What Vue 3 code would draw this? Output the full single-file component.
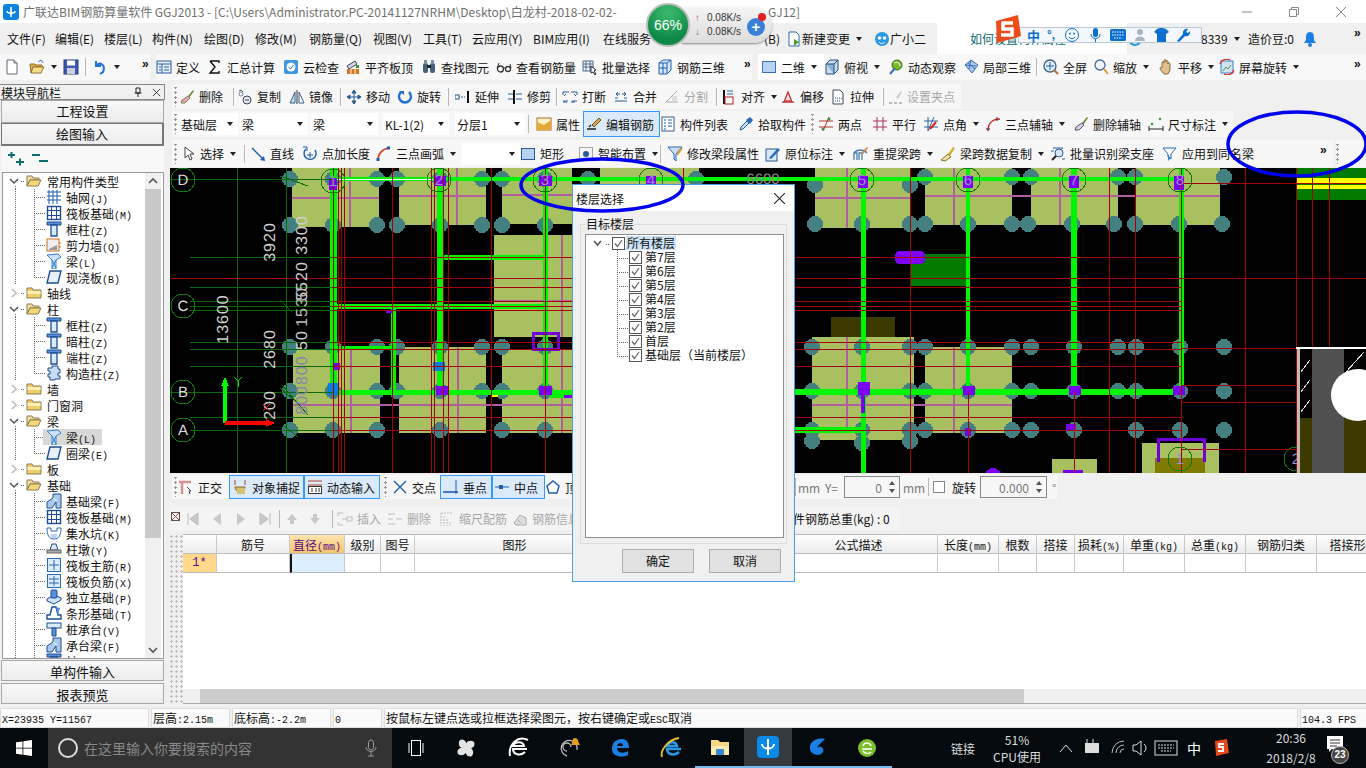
<template>
  <div class="app">
    <div class="title">
      <svg class="logo" viewBox="0 0 16 16"><rect width="16" height="16" rx="3" fill="#0a84e0"/><path d="M8 3v10M4 7c0 3 8 3 8 0" fill="none" stroke="#fff" stroke-width="1.6"/></svg>
      <span class="ttl a">广联达BIM钢筋算量软件 GGJ2013 - [C:\Users\Administrator.PC-20141127NRHM\Desktop\白龙村-2018-02-02-</span>
      <span class="ttl b">GJ12]</span>
      <div class="winbtns">
        <svg viewBox="0 0 10 10" class="wb min"><path d="M0 5h10" stroke="#888" /></svg>
        <svg viewBox="0 0 10 10" class="wb res"><path d="M.5 2.5h7v7h-7zM2.5 2.5v-2h7v7h-2" fill="none" stroke="#888"/></svg>
        <svg viewBox="0 0 10 10" class="wb cls"><path d="M0 0l10 10M10 0L0 10" stroke="#888"/></svg>
      </div>
    </div>

    <div class="work">
      <template v-for="b in blocks" :key="b.id">
        <div v-if="b.items" class="tb" :class="b.id" :style="{ marginLeft: b.ml + 'px', width: b.w + 'px' }">
          <div v-for="(c, n) in b.items" :key="n" class="cell" :class="c.cls" :style="{ width: c.w + 'px', paddingLeft: c.pl + 'px' }">
            <div v-if="c.dd" class="ddbox" :class="{ spin: c.spin }" :style="{ width: c.dd + 'px' }">
              <span>{{ c.t }}</span>
              <svg v-if="c.spin" viewBox="0 0 8 16" width="8" height="16"><path d="M4 2l3 4H1zM4 14l3-4H1z" fill="#555" /></svg>
              <i v-else class="arr"></i>
            </div>
            <template v-else>
              <svg v-if="c.i" class="ico" viewBox="0 0 16 16" v-html="icons[c.i]"></svg>
              <span v-if="c.t" class="lbl">{{ c.t }}</span>
              <i v-if="c.a" class="arr"></i>
            </template>
          </div>
        </div>

        <svg v-else-if="b.id === 'canvas'" class="canvas" viewBox="170 168 1196 305" shape-rendering="crispEdges">
          <rect x="170" y="168" width="1196" height="305" fill="#000" />
          <rect v-for="(s, n) in cad.slabs" :key="'s' + n" :x="s[0]" :y="s[1]" :width="s[2] - s[0]" :height="s[3] - s[1]" :fill="s[4] || '#a9c060'" />
          <line v-for="(l, n) in cad.pink" :key="'p' + n" :x1="l[0]" :y1="l[1]" :x2="l[2]" :y2="l[3]" stroke="#b0609f" stroke-width="2" />
          <circle v-for="(c, n) in cad.cols" :key="'c' + n" :cx="c[0]" :cy="c[1]" r="8" fill="#43807f" />
          <line v-for="(l, n) in cad.beams" :key="'b' + n" :x1="l[0]" :y1="l[1]" :x2="l[2]" :y2="l[3]" stroke="#00f500" :stroke-width="l[4]" />
          <line x1="337" y1="179" x2="433" y2="179" stroke="#fff" />
          <rect v-for="(s, n) in cad.marks" :key="'m' + n" :x="s[0]" :y="s[1]" :width="s[2]" :height="s[3]" :fill="s[4] || '#7b00f0'" />
          <path d="M533.5 333.5h25v16h-25z" fill="none" stroke="#7000d8" stroke-width="3" />
          <path d="M1158.5 462V439.5h46V462" fill="none" stroke="#7000d8" stroke-width="3" />
          <circle cx="993" cy="476" r="8" fill="#7b00f0" />
          <rect x="895" y="251" width="30" height="13" rx="5" fill="#8000ff" />
          <line v-for="(l, n) in cad.gridLines" :key="'g' + n" :x1="l[0]" :y1="l[1]" :x2="l[2]" :y2="l[3]" stroke="#0a6a0a" />
          <line v-for="(l, n) in cad.reds" :key="'r' + n" :x1="l[0]" :y1="l[1]" :x2="l[2]" :y2="l[3]" stroke="#a40000" />
          <g fill="none" stroke="#0a7a0a">
            <circle v-for="(a, n) in cad.bubbles" :key="'bu' + n" :cx="a[0]" :cy="a[1]" :r="a[3] || 12" />
          </g>
          <g text-rendering="geometricPrecision" class="cadtxt">
            <text v-for="(a, n) in cad.bubbles" :key="'bt' + n" :x="a[0]" :y="a[1] + 5" text-anchor="middle" :fill="a[3] ? '#9a8fd0' : '#ddd'" font-size="15">{{ a[2] }}</text>
            <text v-for="(d, n) in cad.dims" :key="'d' + n" :transform="`translate(${d[0]} ${d[1]}) rotate(-90)`" text-anchor="middle" :fill="d[3] || '#d0d0d0'" font-size="16" letter-spacing="1">{{ d[2] }}</text>
            <text x="763" y="184" text-anchor="middle" fill="#8d8d8d" font-size="15">6600</text>
          </g>
          <!-- UCS -->
          <path d="M225 423V383" stroke="#00ff00" stroke-width="4" />
          <path d="M225 377l-4 9h8z" fill="#00ff00" />
          <path d="M225 423h45" stroke="#ff0000" stroke-width="4" />
          <path d="M275 423l-9-4v8z" fill="#ff0000" />
          <path d="M234 377l4 4 4-4M238 381v6" stroke="#00d000" fill="none" />
          <path d="M263 404l7 7M270 404l-7 7" stroke="#ff2020" />
          <!-- right corner -->
          <rect x="1296" y="347" width="70" height="2" fill="#fff" />
          <rect x="1297" y="349" width="15" height="124" fill="#000" />
          <rect x="1297" y="349" width="3" height="124" fill="#bbb" />
          <g stroke="#ddd"><path d="M1301 372l9-12M1301 392l9-12M1301 412l9-12M1346 372l18-20" /></g>
          <rect x="1300" y="418" width="12" height="55" fill="#3d3a00" />
          <rect x="1312" y="349" width="32" height="124" fill="#505050" />
          <rect x="1344" y="418" width="22" height="55" fill="#3d3a00" />
          <ellipse cx="1358" cy="395" rx="27" ry="26" fill="#fff" shape-rendering="auto" />
        </svg>

        <div v-else-if="b.id === 'gridtable'" class="gridwrap">
          <div class="gutter"></div>
          <div class="gridmain">
            <div class="thead">
              <div v-for="h in columns" :key="h.x" class="th" :class="{ hot: h.hot }" :style="{ width: h.w + 'px' }">
                {{ h.t }}<small v-if="h.u">{{ h.u }}</small>
              </div>
            </div>
            <div class="tbody">
              <div v-for="h in columns" :key="h.x" class="td" :class="{ rowhead: h.rh, cur: h.hot }" :style="{ width: h.w + 'px' }">{{ h.rh ? '1*' : '' }}</div>
            </div>
            <div class="tfill"></div>
            <div class="hscroll"><div class="thumb"></div></div>
          </div>
        </div>
      </template>

      <aside class="nav">
        <div class="navhead">
          <span>模块导航栏</span>
          <svg viewBox="0 0 10 10" class="pin"><path d="M3 1h4v5H3zM1.500 6h7M5 6v4" fill="none" stroke="#222" /></svg>
          <svg viewBox="0 0 10 10" class="pinx"><path d="M1 1l8 8M9 1l-8 8" stroke="#333" /></svg>
        </div>
        <div class="navbtn">工程设置</div>
        <div class="navbtn pressed">绘图输入</div>
        <div class="navtools">
          <svg viewBox="0 0 18 16" width="18" height="16"><path d="M1 4h7M4.500 1v6M9 11h8M13 7.500v7" stroke="#0b6e6e" stroke-width="2" /></svg>
          <svg viewBox="0 0 18 16" width="18" height="16"><path d="M1 4h8M8 10h9" stroke="#0b6e6e" stroke-width="2" /></svg>
        </div>
        <div class="treebox">
          <div class="treelist">
            <div v-for="(r, n) in tree" :key="n" class="trow">
              <svg class="guide" :width="r.lv ? 43 : 23" height="16" shape-rendering="crispEdges">
                <template v-if="r.lv">
                  <path d="M12 0v16" stroke="#666" stroke-dasharray="1 1" />
                  <path :d="r.last ? 'M31 0v8' : 'M31 0v16'" stroke="#666" stroke-dasharray="1 1" />
                  <path d="M31 8h11" stroke="#666" stroke-dasharray="1 1" />
                </template>
                <template v-else>
                  <path v-if="r.open" d="M12 13v3" stroke="#666" stroke-dasharray="1 1" />
                  <path v-if="r.open" d="M7 6l4 4 4-4" fill="none" stroke="#555" stroke-width="1.500" shape-rendering="auto" />
                  <path v-else d="M9 4l4 4-4 4" fill="none" stroke="#bbb" stroke-width="1.500" shape-rendering="auto" />
                  <path d="M18 8h4" stroke="#666" stroke-dasharray="1 1" />
                </template>
              </svg>
              <div class="tnode" :class="{ sel: r.sel, l0: !r.lv }">
                <svg class="ico" viewBox="0 0 16 16" v-html="icons[r.ic]"></svg>
                <span>{{ r.t.split('(')[0] }}<small v-if="r.t.includes('(')">({{ r.t.split('(')[1] }}</small></span>
              </div>
            </div>
          </div>
          <div class="vscroll">
            <svg class="vbtn" viewBox="0 0 16 16"><path d="M4 10l4-4 4 4" fill="none" stroke="#555" stroke-width="1.600" /></svg>
            <div class="vthumb"></div>
            <div class="vtrack"></div>
            <svg class="vbtn" viewBox="0 0 16 16"><path d="M4 6l4 4 4-4" fill="none" stroke="#555" stroke-width="1.600" /></svg>
          </div>
        </div>
        <div class="navbtn low">单构件输入</div>
        <div class="navbtn low second">报表预览</div>
      </aside>
    </div>

    <div class="status">
      <div class="sf" style="width: 146px"><small>X=23935 Y=11567</small></div>
      <div class="sf" style="width: 76px">层高<small>:2.15m</small></div>
      <div class="sf" style="width: 96px">底标高<small>:-2.2m</small></div>
      <div class="sf" style="width: 46px"><small>0</small></div>
      <div class="sf grow">按鼠标左键点选或拉框选择梁图元，按右键确定或<small>ESC</small>取消</div>
      <div class="sf" style="width: 68px"><small>104.3 FPS</small></div>
    </div>

    <div class="taskbar">
      <div class="startbtn">
        <svg viewBox="0 0 16 16" width="16" height="16"><path d="M0 2.300l6.500-.9v6.300H0zM7.300 1.300L16 0v7.700H7.300zM0 8.400h6.500v6.300L0 13.800zM7.300 8.400H16V16l-8.700-1.200z" fill="#fff" /></svg>
      </div>
      <div class="search">
        <svg viewBox="0 0 22 22" width="22" height="22"><circle cx="11" cy="11" r="9" fill="none" stroke="#ddd" stroke-width="2" /></svg>
        <span>在这里输入你要搜索的内容</span>
        <svg class="mic" viewBox="0 0 12 18" width="12" height="18"><rect x="3.500" y="1" width="5" height="10" rx="2.500" fill="none" stroke="#999" /><path d="M1 8c0 6 10 6 10 0M6 13v4M3 17h6" fill="none" stroke="#999" /></svg>
      </div>
      <div class="taskapps">
        <div v-for="t in taskApps" :key="t.x" class="tapp" :class="{ active: t.active, run: t.run }" :style="{ width: t.w + 'px' }">
          <svg viewBox="0 0 24 24" width="24" height="24" v-html="t.svg"></svg>
        </div>
      </div>
      <div class="tray">
        <span class="linktxt">链接</span>
        <div class="cpu"><span>51%</span><span>CPU使用</span></div>
        <svg viewBox="0 0 122 20" width="122" height="20" class="trayicons">
          <path d="M0 14l6-7 6 7" fill="none" stroke="#ddd" />
          <rect x="25" y="5" width="14" height="10" fill="#ddd" /><path d="M27 1v4M33 1v4" stroke="#ddd" />
          <path d="M52 15a12 12 0 0 1 12-12M56 15a8 8 0 0 1 8-8M60 15a4 4 0 0 1 4-4" fill="none" stroke="#bbb" />
          <path d="M73 7h3l5-4v14l-5-4h-3zM84 6a5 5 0 0 1 0 8" fill="none" stroke="#ddd" />
          <rect x="95" y="3" width="22" height="14" fill="none" stroke="#ddd" /><path d="M98 7h16M98 10h16M101 13h10" stroke="#ddd" stroke-dasharray="2 1" />
        </svg>
        <span class="zh">中</span>
        <svg viewBox="0 0 16 18" width="16" height="18" class="sg"><path d="M2 2l12-2 2 14-13 3z" fill="#e8471c" /><path d="M11 5H6v3h4v4H5" fill="none" stroke="#fff" stroke-width="1.800" /></svg>
        <div class="clock"><span>20:36</span><span>2018/2/8</span></div>
        <div class="notif">
          <svg viewBox="0 0 16 16" width="16" height="16"><path d="M0 0h16v13H5l-3 3v-3H0z" fill="#fff" /><path d="M3 4h10M3 7h10M3 10h7" stroke="#333" /></svg>
          <b class="badge">23</b>
        </div>
      </div>
    </div>

    <!-- 浮动窗 -->
    <div class="dialog">
      <div class="dlgtitle">
        <span>楼层选择</span>
        <svg viewBox="0 0 10 10" width="11" height="11"><path d="M0 0l10 10M10 0L0 10" stroke="#222" /></svg>
      </div>
      <div class="dlgbody">
        <fieldset class="group">
          <legend>目标楼层</legend>
          <div class="floorbox">
            <div v-for="(f, n) in floors" :key="f" class="frow" :class="{ rootf: n === 0 }">
              <svg class="fguide" :width="n === 0 ? 26 : 43" height="14" shape-rendering="crispEdges">
                <template v-if="n === 0">
                  <path d="M8 5l3.500 4L15 5" fill="none" stroke="#555" stroke-width="1.500" shape-rendering="auto" />
                  <path d="M20 8h4" stroke="#666" stroke-dasharray="1 1" />
                </template>
                <template v-else>
                  <path :d="n === floors.length - 1 ? 'M31 0v8' : 'M31 0v14'" stroke="#666" stroke-dasharray="1 1" />
                  <path d="M31 8h11" stroke="#666" stroke-dasharray="1 1" />
                </template>
              </svg>
              <svg class="chk" viewBox="0 0 13 13" width="13" height="13"><rect x=".5" y=".5" width="12" height="12" fill="#fff" stroke="#555" /><path d="M3 6.500l2.500 3L10 3" fill="none" stroke="#666" stroke-width="1.300" /></svg>
              <span class="ftxt">{{ f }}</span>
            </div>
          </div>
        </fieldset>
        <div class="dlgbtns">
          <div class="dbtn">确定</div>
          <div class="dbtn">取消</div>
        </div>
      </div>
    </div>

    <!-- 网速球 -->
    <div class="meter">
      <div class="ball">66%</div>
      <div class="pill">
        <div class="sp"><b class="up">↑</b>0.08K/s</div>
        <div class="sp"><b class="dn">↓</b>0.08K/s</div>
      </div>
      <div class="plus">+<i></i></div>
    </div>

    <!-- 输入法条 -->
    <div class="ime">
      <svg class="imes" viewBox="0 0 28 28" width="28" height="28"><path d="M3 6l22-6 3 21-24 7z" fill="#ee4b1a" /><path d="M20 8H10v6h9v6H8" fill="none" stroke="#fff" stroke-width="3.500" /></svg>
      <div class="imebar">
        <span class="imez">中</span>
        <span class="imep">°,</span>
        <svg viewBox="0 0 140 14" width="140" height="14">
          <circle cx="12" cy="7" r="6.500" fill="none" stroke="#0b6fd0" /><circle cx="10" cy="5.500" r=".9" fill="#0b6fd0" /><circle cx="14" cy="5.500" r=".9" fill="#0b6fd0" /><path d="M9 9a3.500 3.500 0 0 0 6 0" fill="none" stroke="#0b6fd0" />
          <rect x="33" y="0" width="5" height="9" rx="2.500" fill="#0b6fd0" /><path d="M31 6c0 6 9 6 9 0M35.500 11v3" fill="none" stroke="#0b6fd0" />
          <rect x="50" y="1" width="16" height="12" rx="1.500" fill="#0b6fd0" /><path d="M52 4h12M52 7h12M54 10h8" stroke="#fff" stroke-dasharray="1.500 1" />
          <circle cx="80" cy="4" r="3" fill="#a8b4c0" /><path d="M75 13c0-6 10-6 10 0z" fill="#a8b4c0" />
          <path d="M97 1l3-1h3l3 1 3 3-3 2v8h-9V6l-3-2z" fill="#0b6fd0" />
          <path d="M117 13l6-7a4 4 0 0 1 5-5l-2 3 2 1 2-2a4 4 0 0 1-5 5l-6 6z" fill="#0b6fd0" />
        </svg>
      </div>
    </div>

    <!-- 手绘标记 -->
    <svg class="marks" viewBox="0 0 1366 768">
      <ellipse cx="602" cy="185" rx="81" ry="26" fill="none" stroke="#0000ee" stroke-width="3.500" />
      <ellipse cx="1297" cy="144" rx="69" ry="32" fill="none" stroke="#0000ee" stroke-width="3.500" />
    </svg>
  </div>
</template>

<script setup>
// 工具栏布局：每个单元格的宽度由相邻两项的 x 相减得到
const mk = (id, start, end, list, ml) => {
  const items = list.map((e, i) => {
    const next = i + 1 < list.length ? list[i + 1][0] : end;
    const [x, code, t, o = {}] = e;
    const cell = { w: next - x, pl: o.pl || 0, t: t || '', a: o.a, cls: [], dd: o.dd, spin: o.spin };
    if (code === '|') cell.cls.push('sep');
    else if (code === ':') cell.cls.push('grip');
    else if (code === '>') { cell.cls.push('more'); cell.t = '»'; }
    else if (code === '_') cell.cls.push('gap');
    else if (code) cell.i = code;
    if (o.off) cell.cls.push('off');
    if (o.gray) cell.cls.push('gray');
    if (o.on) cell.cls.push('on');
    if (o.white) cell.cls.push('white');
    if (o.teal) cell.cls.push('teal');
    return cell;
  });
  if (items.length && list[0][0] > start) items.unshift({ w: list[0][0] - start, pl: 0, cls: [] });
  return { id, items, ml: ml, w: end - start };
};

const menuRow = mk('menu', 0, 1366, [
  [7, null, '文件(F)'], [55, null, '编辑(E)'], [104, null, '楼层(L)'], [152, null, '构件(N)'], [204, null, '绘图(D)'],
  [255, null, '修改(M)'], [309, null, '钢筋量(Q)'], [373, null, '视图(V)'], [423, null, '工具(T)'], [472, null, '云应用(Y)'],
  [533, null, 'BIM应用(I)'], [603, null, '在线服务'], [655, null, ''], [764, null, '(B)'],
  [786, 'change', '新建变更', { a: 1 }], [874, 'xiaoer', '广小二'], [937, null, '如何设置构件属性', { white: 1, teal: 1, pl: 33 }],
  [1127, 'xiaoer'], [1201, null, '8339', { a: 1 }], [1248, null, '造价豆:0'], [1302, 'bell', ''], [1351, '>'],
], 0);

const row1 = mk('r1', 0, 1366, [
  [4, 'new'], [29, 'open', '', { a: 1 }], [63, 'save'], [85, '|'], [92, 'undo', '', { a: 1 }], [139, '>'], [150, '_'], [156, 'def', '定义'], [207, 'sigma', '汇总计算'],
  [283, 'cloud', '云检查'], [345, 'level', '平齐板顶'], [421, 'find', '查找图元'], [496, 'glasses', '查看钢筋量'], [582, 'batch', '批量选择'],
  [657, 'r3d', '钢筋三维'], [741, '>'], [752, '_'], [758, 'd2', '二维', { white: 1, a: 1, pl: 3 }], [824, 'top', '俯视', { a: 1 }],
  [888, 'orbit', '动态观察'], [963, 'local', '局部三维'], [1036, '|'], [1043, 'full', '全屏'], [1093, 'zoom', '缩放', { a: 1 }],
  [1158, 'pan', '平移', { a: 1 }], [1219, 'rot', '屏幕旋转', { a: 1 }], [1351, '>'],
], 0);

const row2 = mk('r2', 172, 961, [
  [174, ':'], [179, 'del', '删除'], [233, '|'], [237, 'copy', '复制'], [289, 'mirror', '镜像'], [340, '|'], [346, 'move', '移动'], [397, 'rotate', '旋转'],
  [448, '|'], [455, 'extend', '延伸'], [507, 'trim', '修剪'], [556, '|'], [562, 'break', '打断'], [613, 'merge', '合并'], [664, 'split', '分割', { off: 1 }],
  [716, '|'], [721, 'align', '对齐', { a: 1 }], [780, 'offset', '偏移'], [830, 'stretch', '拉伸'], [883, '|'], [887, 'grips', '设置夹点', { off: 1 }],
], 7);

const row3 = mk('r3', 172, 1233, [
  [174, ':'], [179, null, '基础层', { dd: 59 }], [240, null, '梁', { dd: 68 }], [311, null, '梁', { dd: 67 }], [383, null, 'KL-1(2)', { dd: 66 }], [455, null, '分层1', { dd: 70 }],
  [528, '|'], [536, 'attr', '属性'], [583, 'edit', '编辑钢筋', { on: 1, pl: 2 }], [660, 'list', '构件列表'], [738, 'pick', '拾取构件'], [811, ':'], [818, 'twopt', '两点'],
  [872, 'para', '平行'], [923, 'angle', '点角', { a: 1 }], [985, 'arc3', '三点辅轴', { a: 1 }], [1073, 'delaxis', '删除辅轴'], [1148, 'dim', '尺寸标注', { a: 1 }],
], 7);

const row4 = mk('r4', 172, 1366, [
  [174, ':'], [180, 'sel', '选择', { a: 1 }], [244, '|'], [250, 'line', '直线'], [302, 'ptlen', '点加长度'], [376, 'arc', '三点画弧', { a: 1 }],
  [461, null, '', { dd: 59 }], [520, 'rect', '矩形'], [578, 'smart', '智能布置', { a: 1 }], [660, '|'], [667, 'span', '修改梁段属性'], [765, 'inplace', '原位标注', { a: 1 }],
  [853, 'relift', '重提梁跨', { a: 1 }], [940, 'cpspan', '梁跨数据复制', { a: 1 }], [1050, 'batchid', '批量识别梁支座'], [1162, 'apply', '应用到同名梁'], [1317, '>'], [1333, '_'], [1336, ':'],
], 7);

const snap = mk('snap', 172, 1057, [
  [174, ':'], [178, 'ortho', '正交'], [229, 'osnap', '对象捕捉', { on: 1, pl: 2 }], [304, 'dyn', '动态输入', { on: 1, pl: 2 }], [380, '_'], [384, ':'], [392, 'cross', '交点'],
  [440, 'perp', '垂点', { on: 1, pl: 2 }], [492, 'mid', '中点', { on: 1, pl: 1 }], [545, 'vertex', '顶'], [580, null, ''], [795, '|'], [798, null, 'mm', { gray: 1 }], [825, null, 'Y=', { gray: 1 }],
  [844, null, '0', { dd: 56, spin: 1 }], [903, null, 'mm', { gray: 1 }], [928, '|'], [932, 'box'], [952, null, '旋转'], [980, null, '0.000', { dd: 67, spin: 1 }], [1052, null, '°', { gray: 1 }],
], 7);

const gridbar = mk('gridbar', 170, 900, [
  [170, 'xbox'], [185, 'first'], [209, 'prev'], [233, 'next'], [257, 'last'], [279, '|'], [284, 'up'], [307, 'down'], [332, '|'], [337, 'ins', '插入', { off: 1 }], [387, 'dele', '删除', { off: 1 }],
  [439, 'scale', '缩尺配筋', { off: 1 }], [512, 'info', '钢筋信息', { off: 1 }], [580, null, ''], [765, null, '单构件钢筋总重(kg) : 0'],
], 5);

const blocks = [
  menuRow, row1, row2, row3, row4,
  { id: 'canvas' },
  snap, gridbar,
  { id: 'gridtable' },
];

const colX = [
  [183, 217], [217, 290, '筋号'], [290, 345, '直径', '(mm)', true], [345, 381, '级别'], [381, 415, '图号'], [415, 615, '图形'], [615, 780, '计算公式'],
  [780, 938, '公式描述'], [938, 999, '长度', '(mm)'], [999, 1037, '根数'], [1037, 1075, '搭接'], [1075, 1124, '损耗', '(%)'], [1124, 1185, '单重', '(kg)'],
  [1185, 1246, '总重', '(kg)'], [1246, 1317, '钢筋归类'], [1317, 1391, '搭接形式'],
];
const columns = colX.map((c, i) => ({ x: c[0], w: c[1] - c[0], t: c[2] || '', u: c[3], hot: c[4], rh: i === 0 }));

// 导航树
const t0 = (t, ic, open) => ({ lv: 0, t, ic, open });
const t1 = (t, ic, o = {}) => ({ lv: 1, t, ic, ...o });
const tree = [
  t0('常用构件类型', 'fopen', true), t1('轴网(J)', 'tgrid'), t1('筏板基础(M)', 'traft'), t1('框柱(Z)', 'tcol'), t1('剪力墙(Q)', 'twall'), t1('梁(L)', 'tbeam'), t1('现浇板(B)', 'tslab', { last: true }),
  t0('轴线', 'fclosed'), t0('柱', 'fopen', true), t1('框柱(Z)', 'tcol'), t1('暗柱(Z)', 'tcol'), t1('端柱(Z)', 'tcol'), t1('构造柱(Z)', 'tgear', { last: true }),
  t0('墙', 'fclosed'), t0('门窗洞', 'fclosed'), t0('梁', 'fopen', true), t1('梁(L)', 'tbeam', { sel: true }), t1('圈梁(E)', 'tslab', { last: true }),
  t0('板', 'fclosed'), t0('基础', 'fopen', true), t1('基础梁(F)', 'tfbeam'), t1('筏板基础(M)', 'traft'), t1('集水坑(K)', 'tpit'), t1('柱墩(Y)', 'tpier'), t1('筏板主筋(R)', 'tmain'),
  t1('筏板负筋(X)', 'tneg'), t1('独立基础(P)', 'tiso'), t1('条形基础(T)', 'tstrip'), t1('桩承台(V)', 'tcap'), t1('承台梁(F)', 'tfbeam'), t1('桩(U)', 'tcol'),
];

const floors = ['所有楼层', '第7层', '第6层', '第5层', '第4层', '第3层', '第2层', '首层', '基础层（当前楼层）'];

const icons = {
  new: '<path d="M3 1h7l3 3v11H3z" fill="#fff" stroke="#667"/><path d="M10 1v3h3" fill="#ddd" stroke="#667"/>',
  open: '<path d="M1 5h5l1 1h6v2H4l-2 6z" fill="#e0b050" stroke="#96702a"/><path d="M2 14l2-6h11l-3 6z" fill="#f7dc8c" stroke="#96702a"/><path d="M9 3l3-2 2 3" fill="none" stroke="#3a7fd0"/>',
  save: '<rect x="1" y="1" width="14" height="14" fill="#3d5bb0" stroke="#223a80"/><rect x="4" y="1.500" width="8" height="5" fill="#fff"/><rect x="4" y="9" width="8" height="6" fill="#ccd"/>',
  undo: '<path d="M4 2v5h5M4 7c4-5 10-1 7 6l-3 2" fill="none" stroke="#1f6fd6" stroke-width="2"/>',
  def: '<rect x="1" y="2" width="14" height="12" fill="#e8f0fa" stroke="#2d5c9a"/><path d="M1 5h14M6 5v9M3 8h2M3 11h2M8 8h5M8 11h5" stroke="#2d5c9a"/>',
  sigma: '<path d="M3 2h9v2M11 14H3l5-6-5-6M3 14h9v-2" fill="none" stroke="#111" stroke-width="1.400"/>',
  cloud: '<rect x="1" y="1" width="14" height="14" rx="2" fill="#3d96e0"/><circle cx="8" cy="8" r="4.500" fill="#fff"/><path d="M5.500 8l2 2 3-4" fill="none" stroke="#2c7dc4"/>',
  level: '<path d="M2 7l8-5 2 3-8 5z" fill="#d0d8e8" stroke="#445"/><rect x="2" y="10" width="12" height="5" fill="#d8761e"/><path d="M6 10v5M10 10v5" stroke="#fff"/><path d="M11 6h3v3h-3z" fill="#4a9a30"/>',
  find: '<rect x="2" y="4" width="5" height="10" rx="2" fill="#47607f"/><rect x="9" y="4" width="5" height="10" rx="2" fill="#47607f"/><rect x="3" y="1" width="3" height="4" fill="#7a8ea8"/><rect x="10" y="1" width="3" height="4" fill="#7a8ea8"/><rect x="6" y="6" width="4" height="3" fill="#223"/>',
  glasses: '<circle cx="4.500" cy="10" r="3" fill="none" stroke="#333" stroke-width="1.300"/><circle cx="12" cy="10" r="2.500" fill="none" stroke="#333" stroke-width="1.300"/><path d="M7.500 9h2M1 9l2-5M15 9l-1-4" stroke="#333"/>',
  batch: '<path d="M1 2h10v10H1zM1 5h10M1 8h10M4 2v10M8 2v10" fill="none" stroke="#4a6a90"/><path d="M9 7l5 4-2 1 2 3-1 1-2-3-2 1z" fill="#fff" stroke="#223"/>',
  r3d: '<path d="M2 4l4-3h8v10l-4 4H2z" fill="#d8e8f8" stroke="#1c5db0"/><path d="M2 4h8v11M10 4l4-3M6 4v11M2 9h8" fill="none" stroke="#1c5db0"/>',
  d2: '<rect x="1.500" y="2.500" width="13" height="11" fill="#b8d2f2" stroke="#3a70c0"/>',
  top: '<path d="M2 5l4-4h8v10l-4 4H2z" fill="#c8def0" stroke="#244a78"/><path d="M2 5h8v10M10 5l4-4" fill="#8fb4d8" stroke="#244a78"/>',
  orbit: '<circle cx="9" cy="6" r="5" fill="#7ab62e" stroke="#3c7010"/><path d="M2 15l5-6" stroke="#3a6fc0" stroke-width="2"/><path d="M6 4c3-2 6 0 6 3" fill="none" stroke="#fff"/>',
  local: '<path d="M2 6l6-5 7 5-6 8z" fill="#a8c8ec" stroke="#3a6fb0"/><path d="M5 4l7 6M8 1L6 10M2 6l11 1" stroke="#3a6fb0" fill="none"/>',
  full: '<circle cx="7" cy="7" r="6" fill="#e4eefa" stroke="#3a5f8c" stroke-width="1.300"/><path d="M7 3v8M3 7h8" stroke="#2060b0"/><path d="M11 11l4 4" stroke="#b07030" stroke-width="2"/>',
  zoom: '<circle cx="7" cy="6" r="5" fill="#eef4fb" stroke="#4a6a90" stroke-width="1.300"/><path d="M11 10l4 5" stroke="#d8a030" stroke-width="2"/>',
  pan: '<path d="M4 9V4c0-2 2-2 2 0V2c0-2 2-2 2 0v1c0-2 2-2 2 0v2c0-2 2-1 2 0v6l-2 4H6L2 10c0-2 1-2 2-1z" fill="#e0c090" stroke="#8a6a38"/>',
  rot: '<rect x="2" y="2" width="12" height="12" fill="#cfe4f7" stroke="#3a80c8"/><path d="M4 12l3-4 2 2 3-4" stroke="#4a9a30" fill="none"/><path d="M1 5a7 7 0 0 1 10-4M15 11a7 7 0 0 1-10 4" fill="none" stroke="#e03020" stroke-width="1.400"/>',
  del: '<path d="M9 7l5-6 1 1-5 7z" fill="#6a8f3a"/><path d="M9 7l2 2-5 5H2l1-3z" fill="#e8a0c0" stroke="#884"/>',
  copy: '<path d="M2 2l2-1 2 2" fill="none" stroke="#555"/><circle cx="4" cy="5" r="2" fill="none" stroke="#6a8aa8"/><circle cx="10" cy="11" r="4" fill="#dde8f4" stroke="#445"/><path d="M8 11h4" stroke="#445"/>',
  mirror: '<path d="M8 1v14" stroke="#333"/><path d="M6 3v11H1z" fill="#c8d8ea" stroke="#3a5f8c"/><path d="M10 3v11h5z" fill="#fff" stroke="#3a5f8c"/>',
  move: '<path d="M8 1v14M1 8h14M8 1l-2 3h4zM8 15l-2-3h4zM1 8l3-2v4zM15 8l-3-2v4z" fill="#2a5a96" stroke="#2a5a96"/>',
  rotate: '<path d="M4 3a6 6 0 1 0 8 0" fill="none" stroke="#2070d0" stroke-width="2.400"/><path d="M2 2h5v4z" fill="#2070d0"/>',
  extend: '<path d="M0 8h10" stroke="#2a5a96" stroke-dasharray="2 1"/><rect x="0" y="6" width="4" height="4" fill="#fff" stroke="#2a5a96"/><path d="M13 2v12" stroke="#111" stroke-width="2"/>',
  trim: '<path d="M7 1v14" stroke="#111" stroke-width="2"/><path d="M1 5h5M1 10h5M9 5h6M9 10h6" stroke="#2a5a96"/>',
  break: '<path d="M1 3h6M1 3v3M15 3H9M15 3v3M2 7l2-2M14 7l-2-2M1 12h5M10 12h5" stroke="#2a5a96" fill="none"/><path d="M1 13h14" stroke="#2a5a96" stroke-dasharray="4 4"/>',
  merge: '<path d="M3 5h4M13 5H9M5 3L3 5l2 2M11 3l2 2-2 2M2 12h12" stroke="#2a5a96" fill="none"/><path d="M2 9h3M11 9h3" stroke="#2a5a96"/>',
  split: '<path d="M2 13L13 2M2 13h12" stroke="#aaa" fill="none"/><rect x="8" y="7" width="5" height="5" fill="#ddd"/>',
  align: '<path d="M3 1v14" stroke="#111" stroke-width="2"/><rect x="4" y="8" width="8" height="7" fill="#fff" stroke="#b02020"/><path d="M6 2h6M6 5h6" stroke="#2060b0"/>',
  offset: '<path d="M4 13l4-10 4 10z" fill="#f8e0e0" stroke="#c03030" stroke-width="1.300"/><path d="M2 14c0-3 12-3 12 0" fill="none" stroke="#c03030"/>',
  stretch: '<path d="M3 1h7l3 3v11H3z" fill="#fff" stroke="#3a4a60"/><path d="M5 9h6M5 12h6M11 9l2 1" stroke="#3a4a60" stroke-dasharray="1 1"/>',
  grips: '<path d="M9 8l5-6 1 1-4 7z" fill="#ccc"/><path d="M2 14h3M7 14h3M12 14h3" stroke="#bbb" stroke-width="2"/>',
  attr: '<rect x="1" y="2" width="14" height="12" fill="#fff0c8" stroke="#b07020"/><path d="M1 6l7 3 7-5v10H1z" fill="#e8a838"/>',
  edit: '<path d="M1 13h9M3 11l2-2" stroke="#222" stroke-width="1.400"/><path d="M6 9l7-7 2 2-7 7z" fill="#d8a858" stroke="#6a4a18"/>',
  list: '<rect x="2" y="1" width="12" height="14" fill="#fff" stroke="#3a5f8c"/><path d="M4 4h2M4 7h2M4 10h2M4 13h2M8 4h4M8 7h4M8 10h4" stroke="#2060b0"/>',
  pick: '<path d="M2 14l1-3 6-6 2 2-6 6z" fill="#bfe0f8" stroke="#2a5a96"/><path d="M8 4l4-3 3 3-3 4z" fill="#2a6aba"/>',
  twopt: '<path d="M1 5h14M1 11h14M5 15L11 1" stroke="#b03030" fill="none"/><circle cx="5" cy="13" r="1.500" fill="#30a030"/><circle cx="11" cy="3" r="1.500" fill="#30a030"/>',
  para: '<path d="M1 5h14M1 11h14M5 1v14M11 1v14" stroke="#b03060" fill="none"/>',
  angle: '<path d="M1 5h14M1 11h14M5 1v14M11 1l-6 14" stroke="#3060a0" fill="none"/><path d="M7 13l6-7" stroke="#e02020" stroke-width="2"/>',
  arc3: '<path d="M3 15C3 7 8 3 15 3" fill="none" stroke="#d02020" stroke-width="1.400"/><path d="M1 13h4M12 1v4" stroke="#333"/>',
  delaxis: '<path d="M9 7l5-6 1 1-5 7z" fill="#6a8f3a"/><path d="M9 7l2 2-5 5H2l1-3z" fill="#d8d0e8" stroke="#556"/>',
  dim: '<path d="M1 10v5M15 10v5M1 13h14" stroke="#222"/><circle cx="4" cy="8" r="1.200" fill="#30a030"/><circle cx="12" cy="3" r="1.200" fill="#30a030"/>',
  sel: '<path d="M5 1v11l3-3 2 5 2-1-2-5h4z" fill="#fff" stroke="#444"/>',
  line: '<path d="M2 2l11 11" stroke="#1c5db0" stroke-width="1.500"/><path d="M15 15l-5-1 4-4z" fill="#1c5db0"/>',
  ptlen: '<path d="M4 3a6 6 0 1 0 9 1" fill="none" stroke="#1c5db0" stroke-width="1.400"/><path d="M8 6v6M5 9h6" stroke="#1c5db0"/><path d="M1 1h4v4" fill="none" stroke="#1c5db0"/>',
  arc: '<path d="M2 14C2 8 6 3 13 2" fill="none" stroke="#d8402a" stroke-width="1.600"/><rect x="0.500" y="12" width="3" height="3" fill="#1c5db0"/><rect x="11" y="0.500" width="3" height="3" fill="#1c5db0"/>',
  rect: '<rect x="1.500" y="2.500" width="13" height="11" fill="#b8d2f2" stroke="#2a5a96"/>',
  smart: '<rect x="1.500" y="1.500" width="13" height="13" fill="#f4f4f4" stroke="#555" stroke-dasharray="1 1"/><circle cx="8" cy="8" r="3" fill="#2a5a96"/>',
  span: '<path d="M1 1h14l-6 7v7l-2-2V8z" fill="#c8dcf2" stroke="#2a6aba"/><path d="M10 9l5-7" stroke="#d8a030" stroke-width="2"/>',
  inplace: '<rect x="1" y="3" width="11" height="12" fill="#d8e8f8" stroke="#2a5a96"/><path d="M4 12l9-10 2 2-9 9z" fill="#2a6aba"/>',
  relift: '<path d="M1 14V7h3v7M6 14V7h3v7M1 7c3-4 10-4 13 0" fill="none" stroke="#5080b0" stroke-width="1.300"/><path d="M9 6l5-5 1 1-5 6z" fill="#d08030"/>',
  cpspan: '<path d="M8 8l5-7 2 1-5 8z" fill="#d8b030"/><path d="M8 8l3 3-6 4-4-1z" fill="#f0e0a0" stroke="#887030"/>',
  batchid: '<circle cx="9" cy="7" r="4" fill="#d8e8f8" stroke="#2a5a96"/><path d="M2 14l4-4" stroke="#222" stroke-width="2"/><path d="M3 2h10M1 5h3M12 13h3" stroke="#2a5a96"/>',
  apply: '<path d="M1 2h13l-5 6v5l-3-2V8z" fill="#fff" stroke="#2a6aba"/><path d="M6 15l3-3-3-3z" fill="#2a8ad0"/>',
  ortho: '<path d="M1 3h12M4 3v12" stroke="#d89090" stroke-width="2.400" fill="none"/><path d="M9 8l4 4-2 0 1 3" stroke="#445" fill="#fff"/>',
  osnap: '<path d="M3 1v5M13 1v5" stroke="#a04030"/><path d="M3 8a5 5 0 0 0 10 0z" fill="#d8b050" stroke="#8a7030"/><rect x="5" y="9" width="8" height="6" fill="#d8c070"/>',
  dyn: '<path d="M1 2h14M1 6h14" stroke="#b04030"/><rect x="1.500" y="7.500" width="13" height="7" fill="#fff" stroke="#333"/><path d="M5 9v4M9 9v4M12 9v4" stroke="#333"/>',
  cross: '<path d="M2 2l12 12M14 2L2 14" stroke="#1c5db0" stroke-width="1.400"/>',
  perp: '<path d="M0 13h15" stroke="#1c5db0" stroke-width="1.600"/><path d="M13 1v14" stroke="#1c5db0"/>',
  mid: '<path d="M1 8h14" stroke="#1c5db0"/><rect x="5" y="6" width="4" height="4" fill="#1c5db0"/>',
  vertex: '<path d="M8 2l6 5-2 7H4L2 7z" fill="#fff" stroke="#1c5db0" stroke-width="1.400"/>',
  box: '<rect x="1.500" y="2.500" width="11" height="11" fill="#fff" stroke="#888"/>',
  xbox: '<rect x="1.500" y="1.500" width="8" height="8" fill="#fff" stroke="#555"/><path d="M2 2l7 7M9 2l-7 7" stroke="#b03030"/>',
  first: '<path d="M3 2v12M13 2L5 8l8 6z" fill="#c8c8c8" stroke="#bbb"/>',
  prev: '<path d="M12 2L4 8l8 6z" fill="#c8c8c8"/>',
  next: '<path d="M4 2l8 6-8 6z" fill="#c8c8c8"/>',
  last: '<path d="M13 2v12M3 2l8 6-8 6z" fill="#c8c8c8" stroke="#bbb"/>',
  up: '<path d="M8 3l-5 6h3v4h4V9h3z" fill="#c8c8c8"/>',
  down: '<path d="M8 13l-5-6h3V3h4v4h3z" fill="#c8c8c8"/>',
  ins: '<path d="M1 2h5M1 14h5M1 2v3M1 11v3M5 8h5" stroke="#bbb" fill="none"/><rect x="10" y="6" width="5" height="4" fill="none" stroke="#bbb"/>',
  dele: '<path d="M1 3h7M1 13h7M1 8h5M9 8h6" stroke="#bbb" fill="none"/>',
  scale: '<path d="M2 2h12M2 2v13M5 5v10M8 8v7M11 11v4" stroke="#bbb" stroke-dasharray="2 1" fill="none"/>',
  info: '<path d="M2 12l6-8 6 3v7H4z" fill="#ddd" stroke="#aaa"/><path d="M6 9l3 3" stroke="#aaa"/>',
  change: '<path d="M3 1h7l3 3v11H3z" fill="#fff" stroke="#2a6aba"/><path d="M8 8l5 3-5 4z" fill="#4aa02a"/>',
  xiaoer: '<circle cx="8" cy="8" r="7" fill="#2a9ae0"/><circle cx="5.500" cy="7" r="1.800" fill="#fff"/><circle cx="10.500" cy="7" r="1.800" fill="#fff"/><path d="M5 11c2 2 4 2 6 0" stroke="#fff" fill="none"/>',
  bell: '<path d="M8 1c4 0 4 4 4 8l2 3H2l2-3c0-4 0-8 4-8z" fill="#1a80e8"/><circle cx="8" cy="14" r="2" fill="#1a80e8"/>',
  fopen: '<path d="M1 13V3h5l1 2h6v2H4l-3 6z" fill="#f5e0a0" stroke="#8a7a50"/><path d="M1 13l3-6h11l-3 6z" fill="#f6d878" stroke="#8a7a50"/>',
  fclosed: '<path d="M1 13V3h5l1 2h8v8z" fill="#f3cf68" stroke="#8a7a50"/><path d="M1.500 6h13v3h-13z" fill="#fbeeb8"/>',
  tgrid: '<path d="M1 3h14M1 7h14M1 11h14M3 1v14M7 1v14M11 1v14" stroke="#1c5db0" fill="none"/>',
  traft: '<rect x="1.500" y="1.500" width="13" height="13" fill="#fff" stroke="#1c4e90" stroke-width="1.400"/><path d="M1 5.500h14M1 10.500h14M5.500 1v14M10.500 1v14" stroke="#1c4e90"/>',
  tcol: '<path d="M1 1h14v3H1z" fill="#5a90d8" stroke="#1c4e90"/><path d="M5 4h6v11H5z" fill="#dbe9fa" stroke="#1c4e90" stroke-width="1.300"/>',
  twall: '<rect x="1" y="2" width="12" height="12" fill="#eee" stroke="#d07020"/><path d="M3 12l8-4v5H3z" fill="#999"/><path d="M14 5v2M14 9v2" stroke="#d07020"/>',
  tbeam: '<path d="M1 2l11-1 3 3-5 3v9H6V7z" fill="#cce2f8" stroke="#3a80c8"/><path d="M6 7l4 8M10 7L6 15" stroke="#3a80c8"/>',
  tslab: '<path d="M4 2h11l-3 12H1z" fill="#e8f1fb" stroke="#1c4e90" stroke-width="1.400"/>',
  tgear: '<path d="M2 3h4V1h6v3h2v4h-2v3h2v3h-5v1H4v-3H2V9h2V6H2z" fill="#c8dcf2" stroke="#1c4e90"/>',
  tfbeam: '<path d="M1 15V9l6-4V1h8v14h-5V9L6 15z" fill="#a8c8ec" stroke="#1c4e90"/><path d="M7 5l4 3" stroke="#fff"/>',
  tpit: '<path d="M1 3h4v3h6V3h4M1 3c0 7 2 11 7 11s7-4 7-11" fill="none" stroke="#2a6aba"/><path d="M4 9h8l-2 4H6z" fill="#b8d2f2"/>',
  tpier: '<path d="M6 3h4l2 6H4z" fill="#dde8f4" stroke="#1c4e90"/><rect x="1" y="9" width="14" height="3" fill="#aaa" stroke="#666"/>',
  tmain: '<rect x="1.500" y="1.500" width="13" height="13" fill="#dcebfa" stroke="#2a6aba"/><path d="M8 3v10M3 8h10" stroke="#2a6aba"/>',
  tneg: '<rect x="1.500" y="1.500" width="13" height="13" fill="#dcebfa" stroke="#2a6aba"/><path d="M8 3v10M3 6h10M3 10h10" stroke="#2a6aba"/>',
  tiso: '<path d="M1 10l7-4 7 3v2l-7 4-7-3z" fill="#cce2f8" stroke="#1c4e90"/><rect x="5" y="1" width="6" height="8" rx="1" fill="#5a90d8" stroke="#1c4e90"/>',
  tstrip: '<path d="M6 2h4l2 8h3v4H1v-4h3z" fill="#fff" stroke="#1c4e90" stroke-width="1.400"/><path d="M10 2l4 1-2 7z" fill="#5a90d8"/>',
  tcap: '<rect x="1" y="2" width="14" height="5" fill="#dcebfa" stroke="#1c4e90"/><path d="M6 7h4v8H6z" fill="#5a90d8" stroke="#1c4e90"/>',
};

// CAD 图形数据（屏幕坐标）
const hrange = [257, 278, 287, 301, 306, 310, 342, 349, 366, 417, 430];
const reds = [];
hrange.forEach((y) => reds.push([333, y, 1181, y]));
reds.push([170, 278, 1366, 278]);
[183, 348, 385, 402, 449].forEach((y) => reds.push([1181, y, 1366, y]));
[333, 338, 341, 344, 392, 431, 434, 443, 448, 491, 545, 683, 910, 1109, 1135, 1181].forEach((x) => reds.push([x, 168, x, 473]));
[968, 1074].forEach((x) => reds.push([x, 392, x, 473]));
[1245, 1296, 1312, 1329].forEach((x) => reds.push([x, 168, x, 473]));

const gridLines = [[237, 168, 237, 473], [286, 168, 286, 473]];
[179, 392].forEach((y) => gridLines.push([170, y, 333, y]));
[257, 287, 301, 306, 310, 342, 349, 366, 417, 430].forEach((y) => gridLines.push([190, y, 333, y]));
gridLines.push([280, 176, 308, 186], [280, 300, 292, 312], [282, 385, 308, 415], [280, 388, 300, 405], [283, 425, 298, 437]);

const leftCols = [290, 333, 377, 397, 440, 482, 502, 545];
const rightCols = [812, 862, 910, 925, 968, 1012, 1031, 1074, 1118, 1136, 1180, 1224];
const cols = [];
[...leftCols, 588, 696, 925, 1012, 1031, 1118, 1135, 1224].forEach((x) => cols.push([x, x < 800 ? 179 : 177]));
cols.push([815, 185], [910, 185]);
[...leftCols, 815, 862, 910, 925, 968, 1012, 1028, 1072, 1114, 1135, 1179, 1222].forEach((x) => cols.push([x, x < 800 ? 225 : 224]));
[...leftCols, ...rightCols].forEach((x) => cols.push([x, 347], [x, 391]));
[290, 333, 377, 440, 502, 545, 812, 862, 910, 925, 968, 1012, 1031, 1074, 1136, 1180, 1224].forEach((x) => cols.push([x, 430]));
cols.push([812, 441], [862, 443], [910, 441]);

const cad = {
  slabs: [
    [292, 168, 379, 227], [399, 168, 486, 225], [502, 168, 572, 224], [600, 168, 699, 184], [815, 168, 910, 228], [925, 168, 1012, 225],
    [1031, 168, 1118, 225], [1135, 168, 1220, 225], [494, 235, 572, 337], [293, 350, 380, 433], [399, 347, 486, 433], [502, 350, 572, 433],
    [812, 337, 914, 440], [925, 347, 1012, 433], [1142, 443, 1219, 473], [1155, 458, 1205, 473, '#7f7a00'], [1052, 459, 1097, 473],
    [831, 317, 895, 337, '#3d3a00'], [911, 254, 968, 286, '#007a00'],
    [1296, 168, 1366, 200, '#007a00'], [1296, 178, 1366, 183, '#ffff00'], [1296, 185, 1366, 189, '#ffff00'],
  ],
  pink: [
    [292, 198, 379, 198], [399, 196, 486, 196], [502, 195, 572, 195], [815, 198, 910, 198], [925, 196, 1220, 196], [494, 301, 572, 301],
    [293, 405, 572, 405], [812, 405, 1012, 405], [350, 168, 350, 227], [351, 350, 351, 433], [457, 168, 457, 225], [458, 347, 458, 433],
    [562, 235, 562, 337], [562, 350, 562, 433], [847, 168, 847, 228], [847, 337, 847, 433], [954, 168, 954, 225], [954, 347, 954, 433], [1060, 168, 1060, 225],
  ],
  cols,
  beams: [
    [333, 168, 333, 392, 7], [440, 168, 440, 392, 7], [545, 168, 545, 392, 5], [863, 168, 863, 473, 5], [968, 168, 968, 392, 4], [1074, 168, 1074, 392, 6], [1181, 168, 1181, 392, 5],
    [333, 179, 1181, 179, 4], [440, 257, 545, 257, 5], [333, 306, 545, 306, 5], [333, 348, 393, 348, 4], [393, 306, 393, 392, 5], [333, 392, 572, 392, 5], [794, 392, 1181, 392, 6], [794, 430, 863, 430, 6], [550, 395, 572, 395, 5],
  ],
  marks: [
    [329, 178, 8, 12], [434, 176, 12, 10], [539, 176, 13, 10], [646, 176, 10, 8], [858, 176, 10, 12], [963, 176, 10, 12], [1069, 176, 10, 12], [1174, 176, 10, 14],
    [436, 386, 13, 9], [539, 386, 13, 9], [858, 382, 12, 13], [861, 395, 4, 18], [963, 386, 12, 9], [1069, 386, 12, 9], [1173, 386, 12, 9],
    [333, 363, 7, 7], [328, 383, 10, 12, '#0080e0'], [433, 362, 12, 9, '#0080e0'], [564, 395, 8, 3], [965, 428, 6, 8], [1066, 424, 10, 6],
    [1063, 470, 20, 3], [492, 395, 6, 2, '#ffee00'], [386, 310, 6, 3],
  ],
  gridLines,
  reds,
  bubbles: [
    [183, 180, 'D'], [183, 306, 'C'], [183, 392, 'B'], [183, 430, 'A'], [333, 181, '1', 12], [439, 180, '2', 12], [545, 180, '3', 12], [651, 180, '4', 12],
    [862, 180, '5', 12], [968, 180, '6', 12], [1074, 180, '7', 12], [1180, 180, '8', 12], [1180, 459, '1', 12], [1296, 459, '2', 12],
  ],
  dims: [
    [275, 242, '3920'], [307, 235, '3300'], [228, 319, '13600'], [275, 349, '2680'], [275, 405, '200'],
    [307, 281, '5520'], [307, 307, '1530', '#bbb'], [307, 340, '50'], [307, 385, '800800', '#8a82b0'],
  ],
};

// 任务栏
const taskIcons = [
  [392, 48, '<path d="M5 7v10M19 7v10" stroke="#fff"/><rect x="7.500" y="4.500" width="9" height="15" fill="none" stroke="#fff"/>'],
  [440, 52, '<path d="M12 12C6 14 3 8 6 4c4-2 8 2 6 8zM12 12c6-2 9 4 6 8-4 2-8-2-6-8zM12 12c-2-6 4-9 8-6 2 4-2 8-8 6zM12 12c2 6-4 9-8 6-2-4 2-8 8-6z" fill="#e4e4e4"/>'],
  [492, 52, '<path d="M21 13H7c0 6 8 7 12 3M7 10h11C17 5 9 5 7 10zM4 20C2 8 12-1 22 4" fill="none" stroke="#fff" stroke-width="2"/>'],
  [544, 50, '<path d="M10 20a8 8 0 1 1 10-6M10 15a4 4 0 1 1 4-4" fill="none" stroke="#bbb" stroke-width="1.300"/><path d="M18 2c3 0 3 3 4 5l1 2h-9l1-2c1-2 0-5 3-5z" fill="#e8a020"/>'],
  [594, 52, '<path d="M4 13c0-8 6-10 10-10 5 0 7 4 7 9H9c0 5 7 6 11 3v4c-6 3-16 2-16-6zm5-3h6c0-4-5-4-6 0z" fill="#1a7fe0"/>'],
  [646, 49, '<path d="M22 13H8c0 6 8 7 12 3M8 10h10C17 5 10 5 8 10z" fill="none" stroke="#2a9ae8" stroke-width="2.500"/><path d="M3 21C1 15 8 4 20 2" fill="none" stroke="#e8c030" stroke-width="1.800"/>'],
  [695, 49, '<path d="M3 5h7l2 2h9v13H3z" fill="#f8d880"/><rect x="3" y="11" width="18" height="9" fill="#ffecb0"/><rect x="8" y="14" width="8" height="6" fill="#3a8ad8"/>', 'run'],
  [744, 48, '<rect x="1" y="1" width="22" height="22" rx="4" fill="#0a8ae8"/><path d="M12 4v16M6 9c0 6 12 6 12 0" fill="none" stroke="#fff" stroke-width="2"/>', 'active'],
  [792, 50, '<path d="M20 4C10 2 4 8 5 14c1 6 10 8 13 3 2-4-3-7-6-4 1-3 5-6 8-9z" fill="#1a7fe0"/>', 'run'],
  [841, 50, '<circle cx="12" cy="13" r="9" fill="#7cc030"/><path d="M7 14h10M8 11c1-4 7-4 8 0M8 16c2 3 6 3 8 1" fill="none" stroke="#fff" stroke-width="1.500"/>', 'run'],
];
const taskApps = taskIcons.map((t) => ({ x: t[0], w: t[1], svg: t[2], active: t[3] === 'active', run: t[3] === 'run' || t[3] === 'active' }));
</script>

<style>
html, body { margin: 0; padding: 0; background: #f0f0f0; overflow: hidden; }
</style>

<style scoped>
.app {
  position: relative;
  width: 1366px;
  height: 768px;
  overflow: hidden;
  background: #f0f0f0;
  font: 12px "Noto Sans CJK SC", "Liberation Sans", sans-serif;
  color: #111;
  display: flex;
  flex-direction: column;
}
small { font: 10px "Liberation Mono", monospace; }

/* 标题栏 */
.title { height: 23px; background: #fff; display: flex; align-items: center; color: #707070; flex: none; }
.logo { width: 16px; height: 16px; margin-left: 3px; }
.ttl { white-space: nowrap; overflow: hidden; }
.ttl.a { margin-left: 4px; width: 625px; }
.ttl.b { margin-left: 120px; }
.winbtns { margin-left: auto; display: flex; align-items: center; }
.wb { width: 10px; height: 10px; }
.min { margin-right: 37px; }
.res { margin-right: 37px; }
.cls { margin-right: 20px; }

/* 主体：导航放第一列，其余块都进第二列 */
.work {
  flex: none;
  height: 681px;
  display: grid;
  grid-template-columns: 165px 1201px;
  grid-auto-rows: auto;
  align-content: start;
}
.tb { display: flex; align-items: center; grid-column: 2; background: #f7f7f7; box-sizing: border-box; }
.tb.menu, .tb.r1 { grid-column: 1 / -1; }
.tb.menu { height: 31px; background: #f0f0f0; }
.tb.r1 { height: 26px; margin-bottom: 4px; background: #f8f8f8; }
.tb.r2 { height: 25px; margin-bottom: 2px; }
.tb.r3 { height: 26px; margin-bottom: 3px; }
.tb.r4 { height: 27px; margin-bottom: 1px; }
.tb.snap { height: 24px; margin-top: 2px; margin-bottom: 8px; }
.tb.gridbar { height: 23px; margin-bottom: 4px; background: #f4f4f4; }

.cell { display: flex; align-items: center; flex: none; height: 100%; box-sizing: border-box; white-space: nowrap; }
.ico { width: 16px; height: 16px; flex: none; }
.lbl { margin-left: 4px; }
.menu .lbl, .snap .cell:not(.on) > .lbl:first-child { margin-left: 0; }
.arr { display: block; width: 0; height: 0; margin-left: 6px; border-left: 3px solid transparent; border-right: 3px solid transparent; border-top: 4px solid #222; flex: none; }
.sep::before { content: ""; display: block; width: 1px; height: 18px; background: #b8b8b8; }
.grip { background: radial-gradient(circle, #999 1px, transparent 1.200px) 0 3px / 3px 5px repeat-y; height: 20px; }
.more { font: 12px "Liberation Sans", sans-serif; font-weight: bold; align-items: flex-start; padding-top: 3px; }
.more .lbl { margin-left: 3px; }
.gap { background: #f0f0f0; }
.off { color: #a8a8a8; }
.gray { color: #777; }
.on { background: #dbeaf8; border: 1px solid #3399ff; }
.white { background: #fff; }
.teal { color: #0a6a70; }
.ddbox { height: 22px; background: #fff; display: flex; align-items: center; justify-content: space-between; padding: 0 5px 0 2px; box-sizing: border-box; }
.ddbox.spin { background: #f7f7f7; border: 1px solid #888; color: #777; justify-content: flex-end; gap: 6px; padding: 0 3px; }

.canvas { grid-column: 2; width: 1196px; height: 305px; margin-left: 5px; display: block; }
.cadtxt { font-family: "Liberation Sans", sans-serif; }

/* 钢筋表格 */
.gridwrap { grid-column: 2; display: flex; height: 170px; margin-left: 5px; }
.gutter { width: 13px; background: radial-gradient(circle, #c0c0c0 1px, transparent 1.200px) 4px 0 / 5px 5px; flex: none; }
.gridmain { width: 1183px; display: flex; flex-direction: column; background: #f0f0f0; overflow: hidden; }
.thead, .tbody { display: flex; flex: none; }
.th { height: 20px; line-height: 19px; flex: none; box-sizing: border-box; text-align: center; background: linear-gradient(#fff, #ececec); border-right: 1px solid #c8c8c8; border-bottom: 1px solid #bbb; border-top: 1px solid #bbb; white-space: nowrap; overflow: hidden; }
.th.hot { background: linear-gradient(#fde4ae, #f5c46c); color: #5a0a80; }
.td { height: 19px; flex: none; box-sizing: border-box; background: #fff; border-right: 1px solid #c8c8c8; border-bottom: 1px solid #bbb; }
.td.rowhead { background: #ffd88c; color: #5a0a80; text-align: center; line-height: 18px; font-family: "Liberation Mono", monospace; }
.td.cur { background: #ddeeff; border-left: 2px solid #111; }
.tfill { height: 116px; background: #fff; flex: none; }
.hscroll { height: 14px; background: #f0f0f0; flex: none; border-bottom: 1px solid #aaa; padding-left: 17px; }
.thumb { width: 824px; height: 14px; background: #cdcdcd; }

/* 导航 */
.nav { grid-column: 1; grid-row: 3 / span 7; display: flex; flex-direction: column; height: 620px; width: 165px; background: #f0f0f0; }
.navhead { height: 14px; line-height: 13px; display: flex; align-items: center; border: 1px solid #888; border-left: 0; padding-left: 1px; flex: none; }
.pin { width: 10px; height: 10px; margin-left: 72px; }
.pinx { width: 9px; height: 9px; margin-left: 9px; }
.navbtn { height: 21px; line-height: 20px; margin: 0 1px; border: 1px solid #a8a8a8; background: linear-gradient(#f8f8f8, #ececec); text-align: center; font-size: 13px; flex: none; }
.navbtn.pressed { height: 20px; border-color: #777; border-width: 1px 2px 2px 1px; }
.navtools { height: 26px; display: flex; align-items: center; gap: 6px; padding-left: 6px; background: #f8f8f8; margin: 0 1px; flex: none; }
.treebox { flex: 1; min-height: 0; margin: 0 1px 1px 2px; display: flex; border: 1px solid #999; background: #fff; overflow: hidden; }
.treelist { flex: 1; overflow: hidden; }
.trow { height: 16px; display: flex; align-items: center; white-space: nowrap; }
.guide { flex: none; }
.tnode { display: flex; align-items: center; gap: 4px; height: 16px; padding-right: 6px; }
.tnode.l0 { gap: 5px; }
.tnode.sel { background: #d8d8d8; margin-left: -3px; padding-left: 3px; }
.vscroll { width: 16px; flex: none; display: flex; flex-direction: column; background: #f0f0f0; margin-right: 2px; }
.vbtn { width: 16px; height: 16px; flex: none; }
.vthumb { height: 349px; background: #c8c8c8; flex: none; }
.vtrack { flex: 1; }
.navbtn.low { height: 19px; line-height: 21px; }
.navbtn.second { margin-top: 2px; }

/* 状态栏 */
.status { flex: none; height: 20px; margin-top: 4px; display: flex; gap: 2px; }
.sf { border: 1px solid #ddd; background: #fafafa; line-height: 18px; padding-left: 1px; box-sizing: content-box; height: 18px; white-space: nowrap; flex: none; }
.sf.grow { width: 911px; }

/* 任务栏 */
.taskbar { flex: none; height: 40px; background: #040a0e; display: flex; align-items: center; color: #ddd; white-space: nowrap; }
.startbtn { width: 48px; display: flex; justify-content: center; flex: none; }
.search { width: 344px; height: 40px; background: #333; display: flex; align-items: center; color: #888; font-size: 14px; box-sizing: border-box; padding-left: 9px; flex: none; }
.search span { margin-left: 5px; }
.mic { margin-left: auto; margin-right: 15px; }
.taskapps { display: flex; height: 40px; flex: none; }
.tapp { height: 40px; display: flex; align-items: center; justify-content: center; box-sizing: border-box; flex: none; }
.tapp.run { border-bottom: 2px solid #76b9ed; background-clip: padding-box; }
.tapp.active { background: #343a3e; }
.tray { display: flex; align-items: center; height: 40px; flex: 1; }
.linktxt { margin-left: 59px; flex: none; }
.cpu { display: flex; flex-direction: column; align-items: center; margin-left: 17px; width: 50px; line-height: 17px; flex: none; }
.trayicons { margin-left: 18px; flex: none; }
.zh { color: #fff; font-size: 14px; margin-left: 5px; flex: none; }
.sg { margin-left: 12px; flex: none; }
.clock { display: flex; flex-direction: column; align-items: center; margin-left: 32px; width: 60px; line-height: 20px; flex: none; }
.notif { margin-left: 6px; position: relative; height: 24px; flex: none; }
.badge { position: absolute; left: 4px; top: 10px; width: 16px; height: 16px; border-radius: 50%; background: #444; border: 1px solid #bbb; color: #fff; font: bold 10px/16px "Liberation Sans", sans-serif; text-align: center; }

/* 楼层选择对话框 */
.dialog { position: absolute; left: 572px; top: 184px; width: 223px; height: 398px; background: #f0f0f0; border: 1px solid #4a9ee8; box-sizing: border-box; display: flex; flex-direction: column; }
.dlgtitle { height: 26px; background: #fff; display: flex; align-items: center; justify-content: space-between; padding: 0 9px 0 3px; flex: none; }
.dlgbody { flex: 1; display: flex; flex-direction: column; padding: 4px 7px 0; }
.group { margin: 2px 0 0; padding: 3px 2px 2px 4px; border: 1px solid #dcdcdc; height: 327px; box-sizing: border-box; min-width: 0; }
.group legend { padding: 0; margin-left: 1px; font-size: 12px; line-height: 14px; }
.floorbox { height: 304px; background: #fff; border: 1px solid #8a9096; box-sizing: border-box; padding-top: 1px; overflow: hidden; }
.frow { height: 14px; display: flex; align-items: center; white-space: nowrap; }
.fguide { flex: none; }
.chk { flex: none; }
.ftxt { margin-left: 3px; line-height: 14px; }
.rootf .ftxt { background: #cce4f7; padding: 0 1px; margin-left: 1px; }
.dlgbtns { display: flex; justify-content: flex-end; gap: 15px; margin-top: 5px; padding-right: 6px; }
.dbtn { width: 72px; height: 24px; box-sizing: border-box; line-height: 22px; text-align: center; border: 1px solid #adadad; background: #e1e1e1; }

/* 网速球 */
.meter { position: absolute; left: 646px; top: 3px; height: 44px; width: 128px; }
.ball { position: absolute; left: 0; top: 0; width: 44px; height: 44px; border-radius: 50%; box-sizing: border-box; border: 2px solid #bbb; background: radial-gradient(circle at 50% 20%, #3dbb6c, #0e8a48 70%); color: #fff; text-align: center; font: 14px/40px "Liberation Sans", sans-serif; z-index: 1; }
.pill { position: absolute; left: 36px; top: 4px; width: 90px; height: 36px; border-radius: 0 18px 18px 0; background: linear-gradient(#f4f4f4, #ddd); box-shadow: 0 1px 2px #888; padding: 4px 0 0 17px; box-sizing: border-box; font: 10px/14px "Liberation Sans", sans-serif; color: #333; }
.sp { height: 14px; white-space: nowrap; }
.sp b { display: inline-block; width: 12px; margin-left: -4px; font-weight: bold; }
.sp .up { color: #d8402a; }
.sp .dn { color: #3a9a3a; }
.plus { position: absolute; left: 101px; top: 15px; width: 18px; height: 18px; border-radius: 50%; background: #3a7fd8; color: #fff; font: bold 15px/18px "Liberation Sans", sans-serif; text-align: center; }
.plus i { position: absolute; left: 11px; top: -5px; width: 8px; height: 8px; border-radius: 50%; background: #e02020; }

/* 输入法 */
.ime { position: absolute; left: 993px; top: 15px; display: flex; align-items: flex-end; }
.imes { flex: none; z-index: 1; }
.imebar { width: 182px; height: 14px; margin-left: -3px; background: #f4f7fb; border: 1px solid #b8c8d8; display: flex; align-items: center; color: #0b6fd0; }
.imez { margin-left: 8px; font-weight: bold; font-size: 13px; width: 20px; }
.imep { font: bold 12px/12px "Liberation Sans", sans-serif; width: 13px; }

.marks { position: absolute; left: 0; top: 0; width: 1366px; height: 768px; pointer-events: none; }
</style>
